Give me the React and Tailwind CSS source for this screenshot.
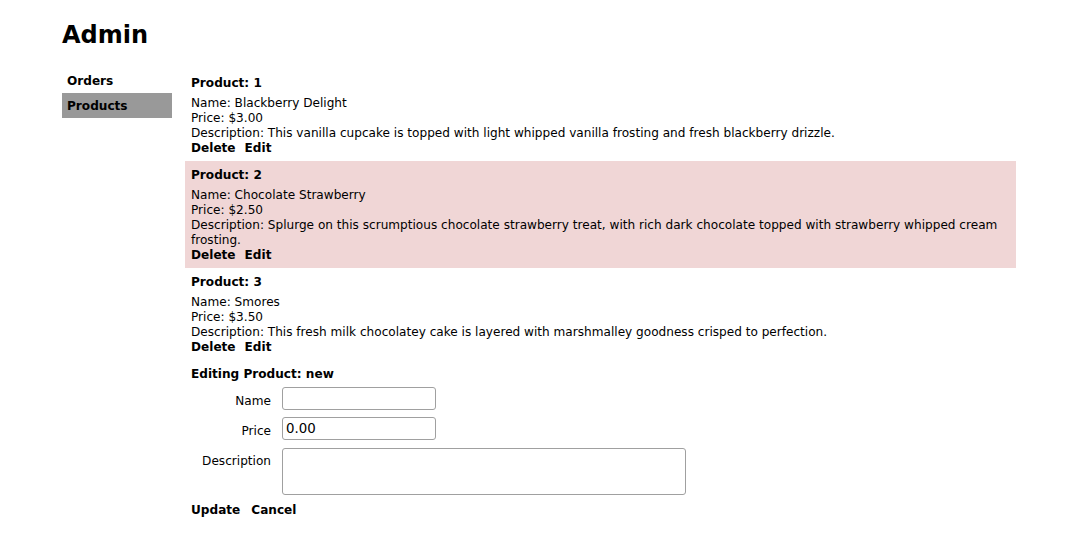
import React from "react";

const products = [
  { id: 1, name: "Blackberry Delight", price: "$3.00", desc: "This vanilla cupcake is topped with light whipped vanilla frosting and fresh blackberry drizzle." },
  { id: 2, name: "Chocolate Strawberry", price: "$2.50", desc: "Splurge on this scrumptious chocolate strawberry treat, with rich dark chocolate topped with strawberry whipped cream frosting.", hl: true },
  { id: 3, name: "Smores", price: "$3.50", desc: "This fresh milk chocolatey cake is layered with marshmalley goodness crisped to perfection." },
];

const inputCls =
  "ml-[11px] w-[154px] h-[23px] border border-[#a0a0a0] rounded-[3px] px-[3px] text-[13.33px] leading-[17px] outline-none bg-white";

export default function App() {
  return (
    <div className="min-h-[552px] bg-white text-black text-[12.1px] leading-[15px]" style={{ fontFamily: '"DejaVu Sans", Verdana, sans-serif' }}>
      <div className="w-[954px] ml-[62px] pt-[20px]">
        <h1 className="text-[24px] leading-[30px] font-bold">Admin</h1>
        <div className="flex mt-[18px]">
          <div className="w-[110px] shrink-0 mr-[13px]">
            <div className="px-[5px] pt-[6px] pb-[4px] font-bold">Orders</div>
            <div className="px-[5px] pt-[6px] pb-[4px] font-bold bg-[#999999]">Products</div>
          </div>
          <div className="flex-1 mt-[1px]">
            {products.map((p) => (
              <div key={p.id} className={`px-[6px] pt-[7px] pb-[5px] ${p.hl ? "bg-[#f0d6d6]" : ""}`}>
                <div className="font-bold mb-[5px]">Product: {p.id}</div>
                <div>Name: {p.name}</div>
                <div>Price: {p.price}</div>
                <div>Description: {p.desc}</div>
                <div className="font-bold flex gap-[9px]">
                  <span>Delete</span>
                  <span>Edit</span>
                </div>
              </div>
            ))}
            <div className="px-[6px] pt-[7px] pb-[5px]">
              <div className="font-bold">Editing Product: new</div>
              <div className="mt-[5px] flex flex-col gap-[7px]">
                <div className="flex items-center">
                  <div className="w-[80px] text-right pt-[5px]">Name</div>
                  <input className={inputCls} />
                </div>
                <div className="flex items-center">
                  <div className="w-[80px] text-right pt-[5px]">Price</div>
                  <input defaultValue="0.00" className={inputCls} />
                </div>
                <div className="flex items-start mt-[1px]">
                  <div className="w-[80px] text-right pt-[6px]">Description</div>
                  <textarea className="ml-[11px] w-[404px] h-[47px] border border-[#a0a0a0] rounded-[3px] px-[3px] text-[13.33px] outline-none resize-none bg-white" />
                </div>
              </div>
              <div className="font-bold flex gap-[11px] mt-[8px]">
                <span>Update</span>
                <span>Cancel</span>
              </div>
            </div>
          </div>
        </div>
      </div>
    </div>
  );
}
